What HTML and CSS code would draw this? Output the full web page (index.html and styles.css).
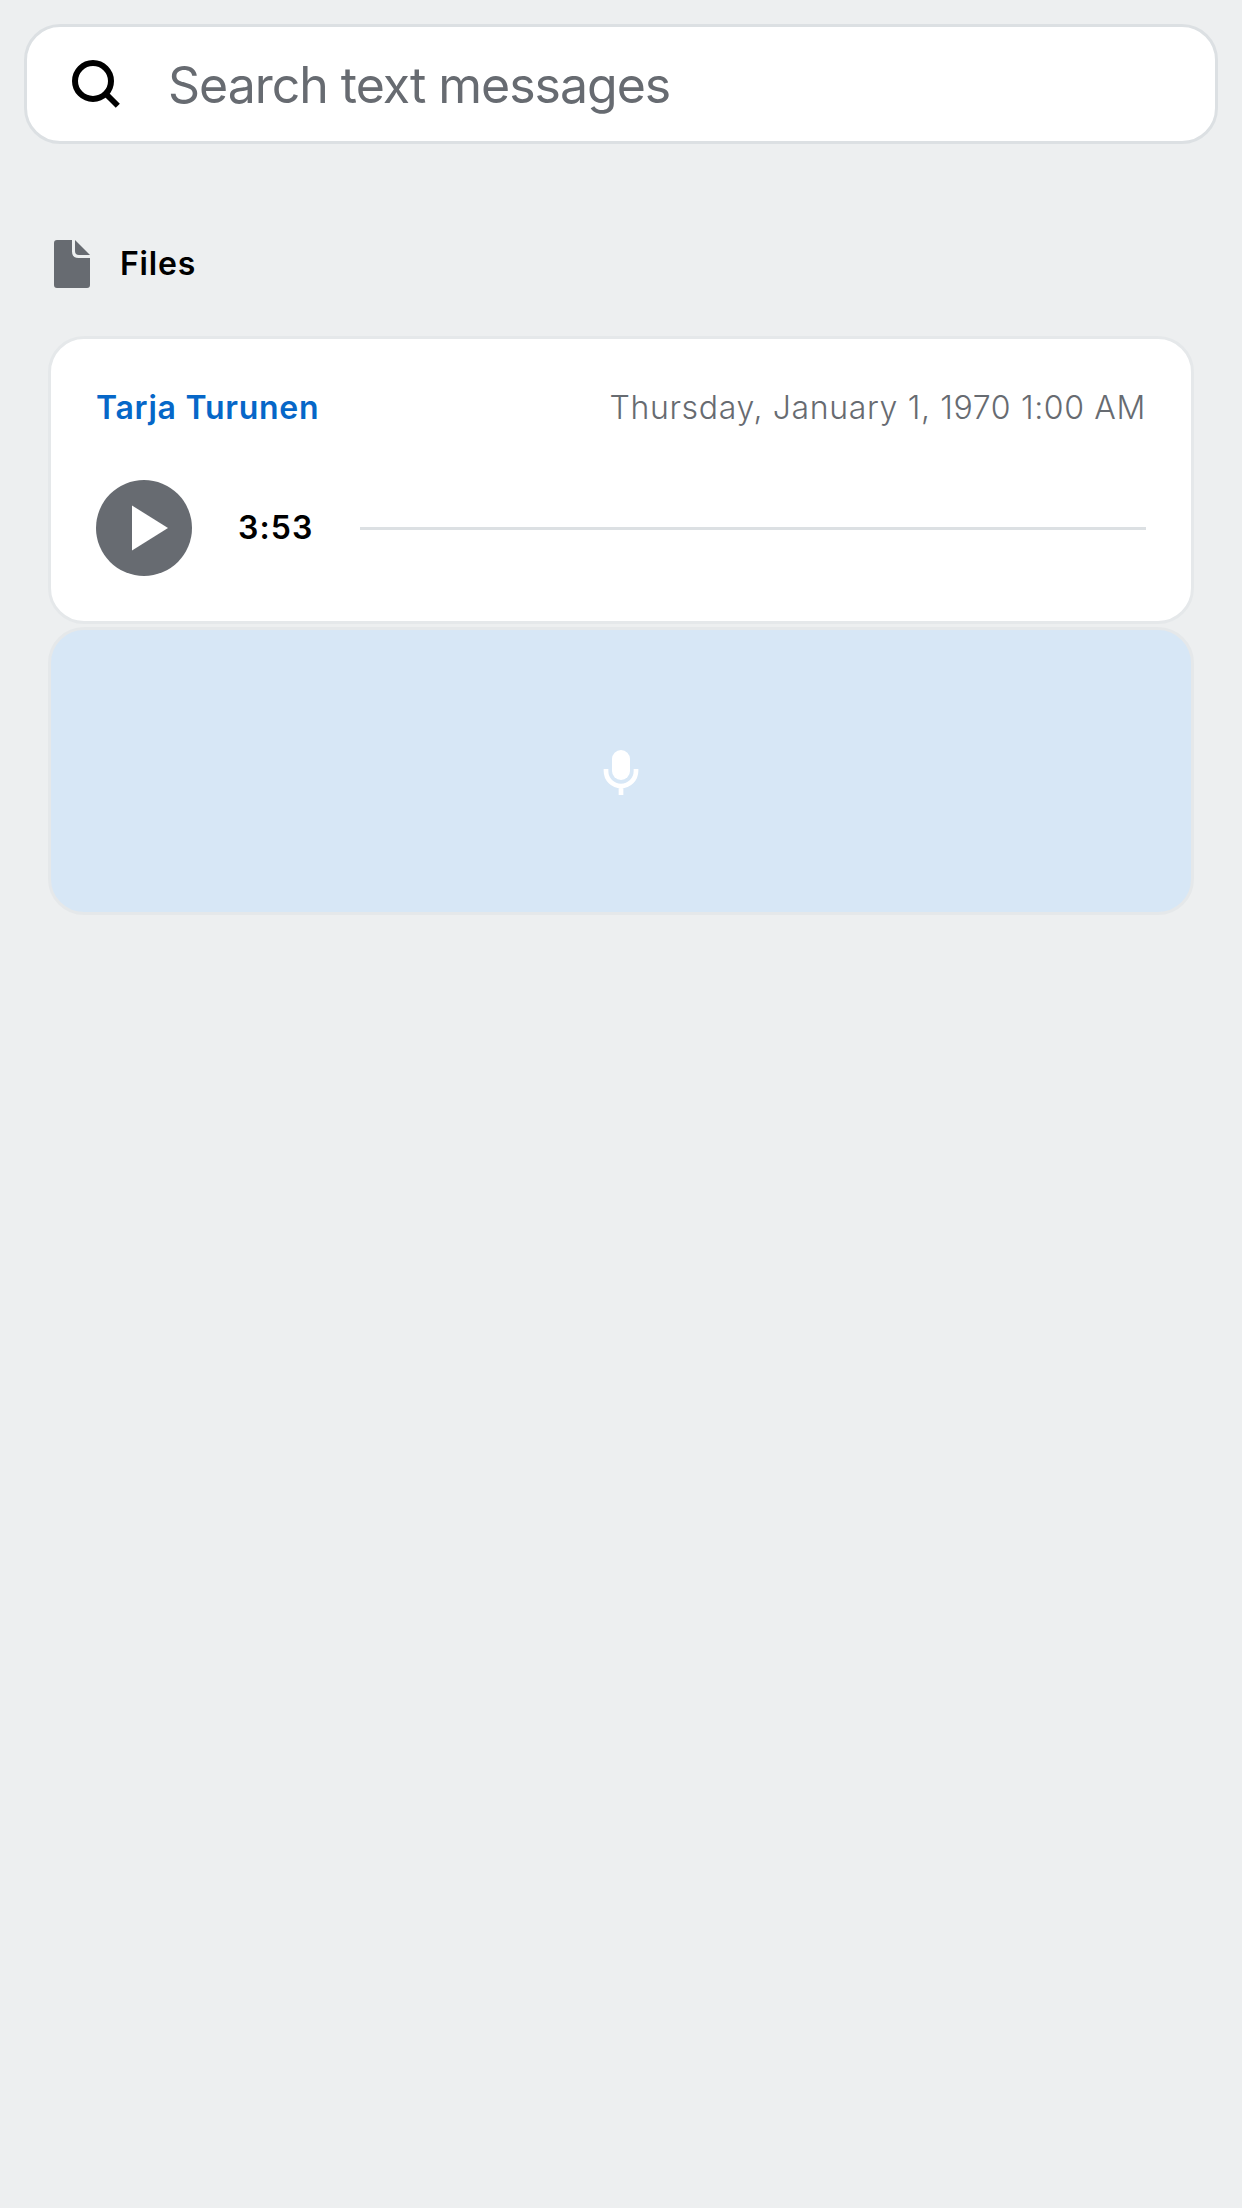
FILE: index.html
```html
<!DOCTYPE html>
<html lang="en">
<head>
  <meta charset="utf-8">
  <title>Search text messages</title>
  <link rel="stylesheet" href="styles.css">
</head>
<body>
  <header class="search">
    <svg class="search-icon" viewBox="0 0 48 48" aria-hidden="true">
      <circle cx="21" cy="21" r="18" fill="none" stroke="#000" stroke-width="6"/>
      <path d="M33 33l12.8 12.8" fill="none" stroke="#000" stroke-width="5.8"/>
    </svg>
    <span class="search-placeholder">Search text messages</span>
  </header>
  <main class="section">
    <div class="section-header">
      <svg class="file-icon" viewBox="0 0 36 48" aria-hidden="true">
        <path d="M3 0H18V11.5Q18 18 24.5 18H36V45Q36 48 33 48H3Q0 48 0 45V3Q0 0 3 0Z"/>
        <path d="M21 0L36 15H25Q21 15 21 11Z"/>
      </svg>
      <h2 class="section-title">Files</h2>
    </div>
    <div class="cards">
      <article class="card">
        <div class="card-header">
          <span class="sender">Tarja Turunen</span>
          <time class="date">Thursday, January 1, 1970 1:00 AM</time>
        </div>
        <div class="player">
          <svg class="play-icon" viewBox="0 0 96 96" aria-hidden="true">
            <circle cx="48" cy="48" r="48" fill="#676b71"/>
            <path d="M36 25.5L72 48L36 70.5Z" fill="#fff"/>
          </svg>
          <span class="duration">3:53</span>
          <div class="seek-bar"></div>
        </div>
      </article>
      <article class="card card-restricted">
        <svg class="mic-icon" viewBox="0 0 36 48" aria-hidden="true">
          <rect x="9" y="0" width="18" height="30" rx="9" fill="#fff"/>
          <path d="M3 19V21A15 15 0 0 0 33 21V19M18 36V45" fill="none" stroke="#fff" stroke-width="4.7"/>
        </svg>
      </article>
    </div>
  </main>
</body>
</html>
```
FILE: styles.css
```css
* {
  box-sizing: border-box;
}

body {
  margin: 0;
  min-height: 100vh;
  padding: 24px;
  background: #edeff0;
  color: #000;
  font-family: Inter, "Liberation Sans", sans-serif;
}

svg {
  display: block;
  flex: none;
}

.search {
  display: flex;
  align-items: center;
  height: 120px;
  padding: 0 45px;
  border: 3px solid #dce0e3;
  border-radius: 36px;
  background: #fff;
}

.search-icon {
  width: 48px;
  height: 48px;
}

.search-placeholder {
  margin-left: 48px;
  padding-top: 2px;
  color: #676b71;
  font-size: 50px;
  line-height: 60px;
  letter-spacing: -1.02px;
}

.section {
  padding: 96px 24px 0;
}

.section-header {
  display: flex;
  align-items: center;
  height: 48px;
  padding-left: 6px;
}

.file-icon {
  width: 36px;
  height: 48px;
  fill: #676b71;
}

.section-title {
  margin: 0 0 0 30px;
  padding-bottom: 1px;
  font-size: 32px;
  font-weight: 600;
  line-height: 39px;
  letter-spacing: 0.8px;
}

.cards {
  display: flex;
  flex-direction: column;
  gap: 3px;
  margin-top: 48px;
}

.card {
  height: 288px;
  padding: 45px;
  border: 3px solid #e5e8ea;
  border-radius: 36px;
  background: #fff;
}

.card-header {
  display: flex;
  justify-content: space-between;
  padding-top: 4px;
  font-size: 32px;
  line-height: 39px;
}

.sender {
  color: #0667c8;
  font-weight: 600;
  letter-spacing: 0.72px;
}

.date {
  color: #676b71;
  font-weight: 300;
  letter-spacing: 0.65px;
}

.player {
  display: flex;
  align-items: center;
  margin-top: 53px;
}

.play-icon {
  width: 96px;
  height: 96px;
}

.duration {
  width: 76px;
  margin: 0 46px;
  padding-bottom: 1px;
  font-size: 32px;
  font-weight: 600;
  line-height: 39px;
  letter-spacing: 1.1px;
}

.seek-bar {
  flex: 1;
  height: 3px;
  margin-top: 1px;
  background: #dce0e3;
}

.card-restricted {
  display: flex;
  align-items: center;
  justify-content: center;
  background: #d7e7f6;
}

.mic-icon {
  width: 36px;
  height: 48px;
  margin-top: 6px;
}
```
